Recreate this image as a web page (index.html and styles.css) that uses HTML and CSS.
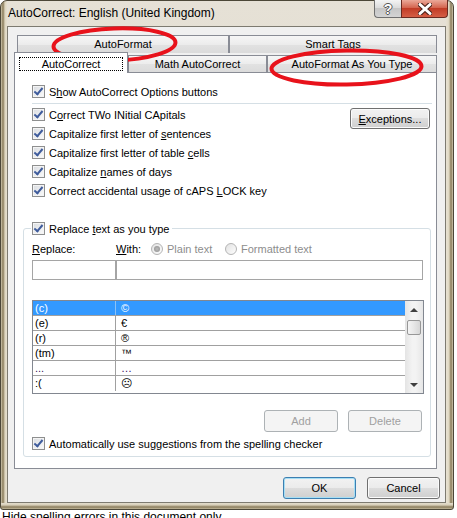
FILE: index.html
```html
<!doctype html>
<html>
 <head>
  <title>AutoCorrect: English (United Kingdom)</title>
  <link rel="stylesheet" href="styles.css">
 </head>
 <body>
  <div class="window">
   <div class="titlebar">
    <span class="title">AutoCorrect: English (United Kingdom)</span>
    <div class="caption-buttons">
     <span class="caption-btn help">?</span>
     <span class="caption-btn close">
      <svg width="14" height="12" viewBox="0 0 14 12">
       <path d="M2 1.5 L12 10.5 M12 1.5 L2 10.5" stroke="#4a2018" stroke-width="5" stroke-linecap="round"/>
       <path d="M2 1.5 L12 10.5 M12 1.5 L2 10.5" stroke="#fff" stroke-width="3" stroke-linecap="round"/>
      </svg>
     </span>
    </div>
   </div>
   <div class="client">
    <div class="tabs">
     <div class="tab-row back">
      <div class="tab tab-autoformat">AutoFormat</div>
      <div class="tab tab-smart">Smart Tags</div>
     </div>
     <div class="tab-row front">
      <div class="tab selected"><span class="focus">AutoCorrect</span></div>
      <div class="tab tab-math">Math AutoCorrect</div>
      <div class="tab tab-asyoutype">AutoFormat As You Type</div>
     </div>
    </div>
    <div class="panel">
     <div class="row indent"><span class="cb"></span><span>S<u>h</u>ow AutoCorrect Options buttons</span></div>
     <div class="separator"></div>
     <div class="options">
      <div class="option-list">
       <div class="row"><span class="cb"></span><span>C<u>o</u>rrect TWo INitial CApitals</span></div>
       <div class="row"><span class="cb"></span><span>Capitalize first letter of <u>s</u>entences</span></div>
       <div class="row"><span class="cb"></span><span>Capitalize first letter of table <u>c</u>ells</span></div>
       <div class="row"><span class="cb"></span><span>Capitalize <u>n</u>ames of days</span></div>
       <div class="row"><span class="cb"></span><span>Correct accidental usage of cAPS <u>L</u>OCK key</span></div>
      </div>
      <button class="btn exceptions"><u>E</u>xceptions...</button>
     </div>
     <fieldset class="group">
      <legend class="row"><span class="cb"></span><span>Replace <u>t</u>ext as you type</span></legend>
      <div class="labels">
       <span class="lbl-replace"><u>R</u>eplace:</span>
       <span class="lbl-with"><u>W</u>ith:</span>
       <span class="radio-item plain"><span class="radio checked"></span><span>Plain text</span></span>
       <span class="radio-item"><span class="radio"></span><span>Formatted text</span></span>
      </div>
      <div class="inputs">
       <span class="input replace"></span>
       <span class="input with"></span>
      </div>
      <div class="list">
       <div class="list-body">
        <div class="list-row selected"><span class="key">(c)</span><span class="val">©</span></div>
        <div class="list-row"><span class="key">(e)</span><span class="val">€</span></div>
        <div class="list-row"><span class="key">(r)</span><span class="val">®</span></div>
        <div class="list-row"><span class="key">(tm)</span><span class="val">™</span></div>
        <div class="list-row"><span class="key dots">...</span><span class="val dots">…</span></div>
        <div class="list-row"><span class="key">:(</span><span class="val">☹</span></div>
       </div>
       <div class="scrollbar">
        <div class="sb-arrow"><span class="tri up"></span></div>
        <div class="sb-thumb"></div>
        <div class="sb-track"></div>
        <div class="sb-arrow"><span class="tri down"></span></div>
       </div>
      </div>
      <div class="list-buttons">
       <button class="btn disabled">Add</button>
       <button class="btn disabled">Delete</button>
      </div>
      <div class="row auto-row"><span class="cb"></span><span>Automatically use su<u>g</u>gestions from the spelling checker</span></div>
     </fieldset>
    </div>
    <div class="dialog-buttons">
     <button class="btn default">OK</button>
     <button class="btn">Cancel</button>
    </div>
   </div>
  </div>
  <div class="behind">Hide spelling errors in this document only</div>

  <svg class="marks" width="457" height="100" viewBox="0 0 457 100">
   <ellipse cx="114.5" cy="44.5" rx="61" ry="16" transform="rotate(-2 114.5 44.5)" fill="none" stroke="#e8121b" stroke-width="4"/>
   <ellipse cx="346.5" cy="67.5" rx="75" ry="17" transform="rotate(-1 346.5 67.5)" fill="none" stroke="#e8121b" stroke-width="4"/>
  </svg>
 </body>
</html>
```

FILE: styles.css
```css
body {
  margin: 0;
  background-color: #fff;
  font-family: "Liberation Sans", Arial, sans-serif;
  font-size: 11px;
  color: #000;
  position: relative;
}

u {
  text-underline-offset: 1px;
}

/* window frame */

.window {
  width: 454px;
  height: 510px;
  box-sizing: border-box;
  border: 1px solid #4c4738;
  border-radius: 7px 7px 3px 3px;
  padding: 0 7px 6px 6px;
  display: flex;
  flex-direction: column;
  background:
    linear-gradient(0deg, #c3b99c 0, #8a7c5b 2px, #d8cfb8 4px, #e3ddcd 6px) left bottom / 100% 6px no-repeat,
    linear-gradient(90deg, #cfc6ad 0, #897b59 2px, #ded6c0 4px, #e6e0d0 6px) left top / 6px 100% no-repeat,
    linear-gradient(270deg, #cfc6ad 0, #897b59 2px, #ded6c0 4px, #e6e0d0 6px) right top / 7px 100% no-repeat,
    linear-gradient(#e6e1d6, #dbd4c3);
}

.titlebar {
  height: 25px;
  display: flex;
  justify-content: space-between;
  align-items: flex-start;
  flex: none;
}

.title {
  padding: 5px 0 0 1px;
  font-size: 12px;
  line-height: 14px;
}

.caption-buttons {
  display: flex;
  margin: -1px -2px 0 0;
}

.caption-btn {
  height: 18px;
  box-sizing: border-box;
  display: flex;
  align-items: center;
  justify-content: center;
}

.help {
  width: 27px;
  border: 1px solid #6f6f6f;
  border-top: none;
  border-right: none;
  border-radius: 0 0 0 4px;
  background: linear-gradient(#f4f4f4, #dcdcdc 45%, #c6c6c6 50%, #d4d4d4);
  color: #fff;
  font-weight: bold;
  font-size: 14px;
  text-shadow: 1px 0 #555, -1px 0 #555, 0 1px #555, 0 -1px #555;
}

.close {
  width: 47px;
  border: 1px solid #6a2a20;
  border-top: none;
  border-radius: 0 0 4px 0;
  background: linear-gradient(#eba999, #d4654f 45%, #c13c26 50%, #d55e45);
}

/* client area */

.client {
  flex: 1;
  border: 1px solid #7d7a70;
  background-color: #f0f0f0;
  padding: 8px 5px 0 6px;
  display: flex;
  flex-direction: column;
}

.tabs {
  width: 423px;
}

.tab-row {
  display: flex;
}

.tab-row.back {
  margin-left: 3px;
  height: 18px;
}

.tab-row.front {
  height: 20px;
  margin-top: -1px;
  align-items: flex-end;
}

.tab {
  box-sizing: border-box;
  border: 1px solid #898c95;
  border-bottom: none;
  background: linear-gradient(#f6f6f6, #ececec 50%, #e2e2e2 50%, #dbdbdb);
  text-align: center;
  height: 17px;
  line-height: 16px;
  white-space: nowrap;
}

.back .tab {
  height: 18px;
  line-height: 17px;
}

.tab-autoformat { width: 212px; }
.tab-smart { width: 208px; }
.tab-math { width: 139px; }
.tab-asyoutype { width: 170px; }

.tab.selected {
  width: 114px;
  height: 21px;
  align-self: flex-start;
  background: #fff;
  padding: 4px 4px 0;
  position: relative;
  z-index: 2;
}

.focus {
  display: block;
  border: 1px dotted #000;
  line-height: 12px;
}

.panel {
  width: 423px;
  height: 397px;
  box-sizing: border-box;
  border: 1px solid #898c95;
  background-color: #fff;
  padding: 9px 5px 0 8px;
}

.row {
  display: flex;
  align-items: center;
  height: 19px;
  white-space: nowrap;
}

.indent {
  padding-left: 9px;
}

.cb {
  width: 13px;
  height: 13px;
  box-sizing: border-box;
  border: 1px solid #8e8f8f;
  background: linear-gradient(135deg, #d9dce0, #fbfbfb);
  box-shadow: inset 0 0 0 1px #f4f4f4;
  margin-right: 4px;
  position: relative;
  flex: none;
}

.cb::after {
  content: "";
  position: absolute;
  left: 3px;
  top: 0;
  width: 3px;
  height: 7px;
  border: solid #3f5c9c;
  border-width: 0 2px 2px 0;
  transform: rotate(40deg);
}

.separator {
  height: 1px;
  background-color: #d5dfe5;
  margin: 2px -1px 1px 9px;
}

.options {
  display: flex;
  justify-content: space-between;
  align-items: flex-start;
  padding-left: 9px;
}

.btn {
  box-sizing: border-box;
  height: 22px;
  border: 1px solid #707070;
  border-radius: 3px;
  background: linear-gradient(#f2f2f2, #ebebeb 50%, #dddddd 50%, #cfcfcf);
  box-shadow: inset 0 0 0 1px #fbfbfb;
  font: inherit;
  color: #000;
  padding: 0;
}

.exceptions {
  width: 80px;
  height: 21px;
  margin: 3px 1px 0 0;
}

.btn.disabled {
  border-color: #adb2b5;
  background: #f4f4f4;
  box-shadow: none;
  color: #a0a0a0;
}

.btn.default {
  border-color: #3c7fb1;
  box-shadow: inset 0 0 0 1px #a6def4;
}

/* replace group */

.group {
  margin: 19px 0 0;
  padding: 0 6px 3px 8px;
  border: 1px solid #d5dfe5;
  border-radius: 3px;
  min-width: 0;
}

.group legend {
  padding: 0 3px 0 1px;
  margin-left: -1px;
}

.labels {
  display: flex;
  align-items: center;
  height: 19px;
  margin-top: 1px;
  white-space: nowrap;
}

.lbl-replace { width: 84px; }
.lbl-with { width: 35px; }

.radio-item {
  display: flex;
  align-items: center;
  color: #8d8d8d;
}

.radio-item.plain {
  width: 74px;
}

.radio {
  width: 12px;
  height: 12px;
  box-sizing: border-box;
  border: 1px solid #b4b4b4;
  border-radius: 50%;
  background: linear-gradient(135deg, #e2e2e2, #fdfdfd);
  margin-right: 4px;
  display: flex;
  align-items: center;
  justify-content: center;
}

.radio.checked::after {
  content: "";
  width: 6px;
  height: 6px;
  border-radius: 50%;
  background: radial-gradient(#bcbcbc, #8c8c8c);
}

.inputs {
  display: flex;
  margin-top: 2px;
}

.input {
  height: 20px;
  box-sizing: border-box;
  border: 1px solid #a5a5a5;
  background-color: #fff;
}

.input.replace { width: 84px; }
.input.with { width: 307px; }

.list {
  display: flex;
  margin-top: 20px;
  height: 94px;
  box-sizing: border-box;
  border: 1px solid #828790;
}

.list-body {
  flex: 1;
}

.list-row {
  display: flex;
  height: 15px;
  box-sizing: border-box;
  border-bottom: 1px solid #a0a0a0;
  line-height: 14px;
}

.list-row:last-child {
  border-bottom: none;
}

.list-row .key {
  width: 83px;
  box-sizing: border-box;
  border-right: 1px solid #a0a0a0;
  padding-left: 2px;
}

.list-row .val {
  padding-left: 5px;
}

.list-row .dots {
  color: #3a1060;
}

.list-row.selected {
  background-color: #3399ff;
  color: #fff;
}

.list-row.selected .key {
  border-right-color: #8cc2f7;
}

.scrollbar {
  width: 18px;
  display: flex;
  flex-direction: column;
  align-items: center;
  background: linear-gradient(90deg, #e4e4e4, #f3f3f3 40%, #f3f3f3 60%, #e6e6e6);
}

.sb-arrow {
  height: 17px;
  display: flex;
  align-items: center;
  justify-content: center;
}

.tri {
  width: 0;
  height: 0;
  border-left: 4px solid transparent;
  border-right: 4px solid transparent;
}

.tri.up { border-bottom: 4px solid #404040; }
.tri.down { border-top: 4px solid #404040; }

.sb-thumb {
  width: 14px;
  height: 15px;
  box-sizing: border-box;
  margin-top: 2px;
  border: 1px solid #979797;
  border-radius: 2px;
  background: linear-gradient(90deg, #f4f4f4, #e6e6e6 50%, #d6d6d6);
}

.sb-track {
  flex: 1;
}

.list-buttons {
  display: flex;
  justify-content: flex-end;
  gap: 10px;
  margin: 16px 2px 0 0;
}

.list-buttons .btn {
  width: 74px;
}

.auto-row {
  margin-top: 2px;
}

.dialog-buttons {
  display: flex;
  justify-content: flex-end;
  gap: 11px;
  margin-top: 8px;
}

.dialog-buttons .btn {
  width: 73px;
}

.behind {
  padding-left: 2px;
  font-size: 12px;
  line-height: 14px;
}

.marks {
  position: absolute;
  left: 0;
  top: 0;
  pointer-events: none;
}
```
